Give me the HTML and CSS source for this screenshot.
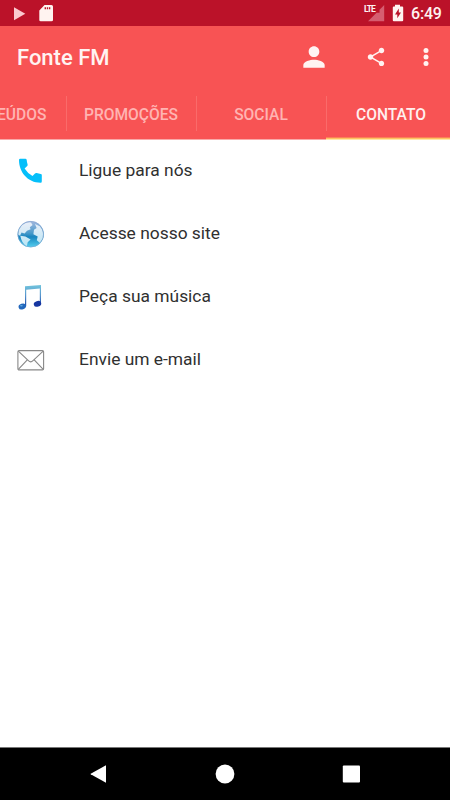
FILE: index.html
```html
<!DOCTYPE html>
<html lang="pt-BR">
<head>
<meta charset="utf-8">
<title>Fonte FM</title>
<link rel="stylesheet" href="styles.css">
</head>
<body>
<div class="status">
  <svg width="60" height="26" viewBox="0 0 60 26"><path d="M14 7.2V20.2L25.3 13.7z" fill="#fbc9cf"/><path fill-rule="evenodd" d="M44.5 5H51.5Q53 5 53 6.5V20Q53 21.3 51.5 21.3H40.7Q39.3 21.3 39.3 20V10.5zM44.6 7.2V9.2H46V7.2zM46.8 7.2V9.2H48.2V7.2zM49 7.2V9.2H50.3V7.2z" fill="#fff3f0"/></svg>
  <div class="status-right">
    <span class="lte">LTE</span>
    <svg width="36" height="26" viewBox="0 0 36 26"><path d="M16.2 5V21.2H0L8.5 12.7H11.5V9.7z" fill="#d65d70"/><path d="M27 4.8H32V6.5H34.2Q35.2 6.5 35.2 7.5V20.2Q35.2 21.3 34.2 21.3H25.8Q24.8 21.3 24.8 20.2V7.5Q24.8 6.5 25.8 6.5H27z" fill="#fff3f1"/><path d="M30.8 8.5L27 14.4H29.3V18.3L33 12.5H30.8z" fill="#bb1229"/></svg>
    <span class="time">6:49</span>
  </div>
</div>
<header class="bar">
  <h1>Fonte FM</h1>
  <div class="actions">
    <svg width="32" height="32" viewBox="0 0 24 24"><path d="M12 12c2.21 0 4-1.79 4-4s-1.79-4-4-4-4 1.79-4 4 1.79 4 4 4zm0 2c-2.67 0-8 1.34-8 4v2h16v-2c0-2.66-5.33-4-8-4z"/></svg>
    <svg class="share" width="22" height="22" viewBox="0 0 24 24"><path d="M18 16.08c-.76 0-1.44.3-1.96.77L8.91 12.7c.05-.23.09-.46.09-.7s-.04-.47-.09-.7l7.05-4.11c.54.5 1.25.81 2.04.81 1.66 0 3-1.34 3-3s-1.34-3-3-3-3 1.34-3 3c0 .24.04.47.09.7L8.04 9.81C7.5 9.31 6.79 9 6 9c-1.66 0-3 1.34-3 3s1.34 3 3 3c.79 0 1.5-.31 2.04-.81l7.12 4.16c-.05.21-.08.43-.08.65 0 1.61 1.31 2.92 2.92 2.92s2.92-1.31 2.92-2.92-1.31-2.92-2.92-2.92z"/></svg>
    <svg class="more" width="6" height="20" viewBox="0 0 6 20"><circle cx="3" cy="3.4" r="2.5"/><circle cx="3" cy="10" r="2.5"/><circle cx="3" cy="16.6" r="2.5"/></svg>
  </div>
</header>
<nav class="tabs">
  <div class="tab"><span>CONTEÚDOS</span></div>
  <div class="tab"><span>PROMOÇÕES</span></div>
  <div class="tab"><span>SOCIAL</span></div>
  <div class="tab active"><span>CONTATO</span></div>
</nav>
<main class="list">
  <div class="row">
    <svg width="28" height="28" viewBox="0 0 28 28"><path d="M3.2 1.8H8.4Q9.5 1.8 9.7 3Q9.9 5.4 10.6 7.4Q10.9 8.3 10.2 9L7.6 11.6Q10.4 16.2 15.5 19L18 16.5Q18.7 15.8 19.6 16.1Q21.7 16.8 23.7 16.9Q24.8 17 24.8 18.1V24.2Q24.8 25.8 23.6 25.7C10.5 25.7 2 15 2 3Q2 1.8 3.2 1.8z" fill="#05bffa"/></svg>
    <span>Ligue para nós</span>
  </div>
  <div class="row">
    <svg width="28" height="28" viewBox="0 0 28 28">
      <defs><linearGradient id="sea" x1="0" y1="0" x2="0" y2="1"><stop offset="0" stop-color="#a3b8df"/><stop offset=".45" stop-color="#4a9bcb"/><stop offset=".6" stop-color="#1785bf"/><stop offset="1" stop-color="#55d0ef"/></linearGradient><linearGradient id="land" x1="0" y1="0" x2="0" y2="1"><stop offset="0" stop-color="#e9eef8"/><stop offset="1" stop-color="#b9e6f5"/></linearGradient></defs>
      <circle cx="13.7" cy="14.2" r="13.1" fill="url(#sea)"/>
      <path d="M4.2 6Q9 1.5 14 2.4L15.6 5L12.8 7.3L13.6 9.2L10 10.8L7.6 13.5L4.5 12.6L3 15.7L1.1 14.4Q1.3 9.3 4.2 6zM3.3 15.8L8.4 16.6L13.6 19.5L10.7 22.3L9.8 26.3Q4.6 23.6 3.3 15.8zM18 4L22.8 6.2Q27.4 11.5 26 18L23 23L19.8 20.2L20.7 16.6L16.4 14.2L17 9.8L19.6 8z" fill="url(#land)"/>
      <circle cx="13.7" cy="14.2" r="12.8" fill="none" stroke="#86a5cf" stroke-width=".6"/>
    </svg>
    <span>Acesse nosso site</span>
  </div>
  <div class="row">
    <svg width="28" height="28" viewBox="0 0 28 28">
      <defs><linearGradient id="note" x1="0" y1="0" x2="0" y2="1"><stop offset="0" stop-color="#72c5dd"/><stop offset=".5" stop-color="#5794cc"/><stop offset="1" stop-color="#1745a8"/></linearGradient></defs>
      <path d="M8 3.2L24 1.9V20.5H22.8V5.6L9.2 6.7V23.3H8z" fill="url(#note)"/>
      <ellipse cx="5.3" cy="23.5" rx="3.8" ry="2.8" transform="rotate(-18 5.3 23.5)" fill="#2267bc"/><ellipse cx="20.5" cy="20.8" rx="3.8" ry="2.8" transform="rotate(-18 20.5 20.8)" fill="#1636a1"/><ellipse cx="4.4" cy="22.8" rx="1.4" ry=".8" fill="#62abdf"/>
    </svg>
    <span>Peça sua música</span>
  </div>
  <div class="row">
    <svg width="28" height="28" viewBox="0 0 28 28"><g fill="none" stroke="#888" stroke-width="1.1"><rect x=".9" y="4.6" width="25.7" height="19.3" rx="1.2"/><path d="M1.3 5.1L11.4 14.7Q13.7 16.9 16 14.7L26.2 5.1M1.3 23.4L10.3 13.8M26.2 23.4L17.2 13.8"/></g></svg>
    <span>Envie um e-mail</span>
  </div>
</main>
<footer class="nav">
  <svg width="18" height="20" viewBox="0 0 18 20"><path d="M16 1.2V18.8L.7 10.3Q.2 10 .7 9.7z"/></svg>
  <svg width="20" height="20" viewBox="0 0 20 20"><circle cx="10" cy="10" r="9.4"/></svg>
  <svg width="18" height="20" viewBox="0 0 18 20"><rect x=".8" y="1.6" width="17.2" height="17" rx="1"/></svg>
</footer>
</body>
</html>
```
FILE: styles.css
```css
* { box-sizing: border-box; }
body {
  margin: 0;
  width: 450px;
  height: 800px;
  display: flex;
  flex-direction: column;
  overflow: hidden;
  background: #fff;
  font-family: Roboto, sans-serif;
}
svg { display: block; flex: none; }
.status {
  height: 26px;
  background: #bb1229;
  display: flex;
  justify-content: space-between;
}
.status-right { display: flex; color: #fff3f1; padding-right: 9px; }
.lte {
  font-size: 8.5px;
  line-height: 8px;
  font-weight: 700;
  letter-spacing: -1px;
  width: 12px;
  margin: 5px -8px 0 0;
  white-space: nowrap;
  position: relative;
}
.time {
  width: 30px;
  margin-left: 7px;
  font-size: 16px;
  line-height: 28px;
  font-weight: 500;
  letter-spacing: -0.2px;
  white-space: nowrap;
}
.bar {
  height: 64px;
  background: #f85354;
  display: flex;
  align-items: center;
  justify-content: space-between;
  padding: 0 21px 2px 17px;
}
h1 {
  margin: 0;
  padding-top: 2px;
  color: #fff3f2;
  font-size: 22px;
  line-height: 28px;
  font-weight: 500;
}
.actions { display: flex; align-items: center; fill: #fff3f2; }
.share { margin-left: 35px; }
.more { margin-left: 36px; }
.tabs {
  height: 50px;
  display: flex;
  margin-left: -64px;
  background: #f85354;
  border-bottom: 1px solid #f9aaa9;
}
.tab {
  width: 130px;
  flex: none;
  height: 49px;
  display: flex;
  align-items: center;
  justify-content: center;
  position: relative;
  color: #ffb4b2;
  font-size: 15.6px;
  font-weight: 500;
}
.tab + .tab::before {
  content: "";
  position: absolute;
  left: 0;
  top: 6px;
  width: 1px;
  height: 35px;
  background: #fa6b6a;
}
.active { color: #fff0ef; height: 50px; padding-bottom: 1px; }
.active::after {
  content: "";
  position: absolute;
  inset: auto 0 0 0;
  height: 3px;
  background: linear-gradient(#f98158 0 1px, #fec162 1px 2px, #ffe7a8 2px);
}
.list { flex: 1; margin-top: -1px; }
.row {
  height: 63px;
  display: flex;
  align-items: center;
  gap: 34px;
  padding-left: 17px;
  font-size: 17.4px;
  color: #303030;
}
.row span { padding-bottom: 1px; }
.nav {
  height: 53px;
  background: #000;
  border-top: 1px solid #777;
  display: flex;
  justify-content: space-between;
  align-items: center;
  padding: 0 90px;
  fill: #fff;
}
```
